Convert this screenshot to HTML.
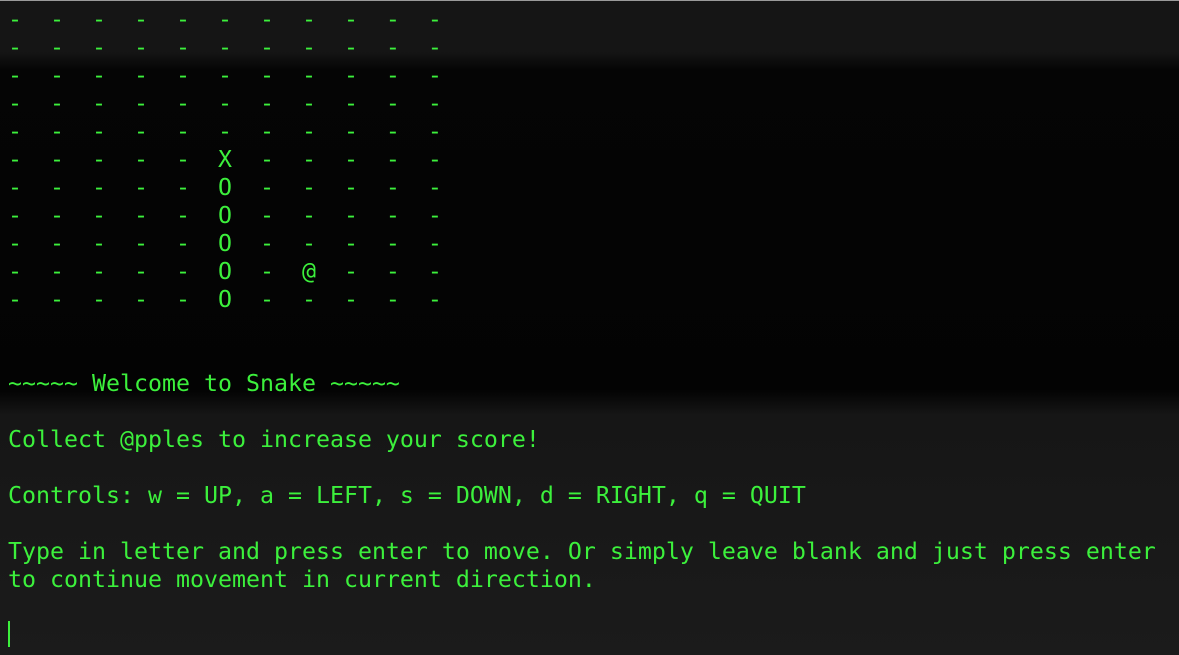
<!DOCTYPE html>
<html><head><style>
html,body{margin:0;padding:0;}
body{width:1179px;height:655px;overflow:hidden;position:relative;
background:linear-gradient(to bottom,#9a9a9a 0,#9a9a9a 1px,#151515 1px,#151515 52px,#050505 70px,#030303 390px,#161616 415px,#1b1b1b 655px);}
pre{position:absolute;left:8px;top:6px;margin:0;font-family:"DejaVu Sans Mono","Liberation Mono",monospace;font-size:23.25px;line-height:28px;color:#3cf03c;white-space:pre;}
.cur{position:absolute;left:8px;top:621px;width:2px;height:26px;background:#3cf03c;}
</style></head><body>
<pre>-  -  -  -  -  -  -  -  -  -  -
-  -  -  -  -  -  -  -  -  -  -
-  -  -  -  -  -  -  -  -  -  -
-  -  -  -  -  -  -  -  -  -  -
-  -  -  -  -  -  -  -  -  -  -
-  -  -  -  -  X  -  -  -  -  -
-  -  -  -  -  O  -  -  -  -  -
-  -  -  -  -  O  -  -  -  -  -
-  -  -  -  -  O  -  -  -  -  -
-  -  -  -  -  O  -  @  -  -  -
-  -  -  -  -  O  -  -  -  -  -


~~~~~ Welcome to Snake ~~~~~

Collect @pples to increase your score!

Controls: w = UP, a = LEFT, s = DOWN, d = RIGHT, q = QUIT

Type in letter and press enter to move. Or simply leave blank and just press enter
to continue movement in current direction.</pre>
<div class="cur"></div>
</body></html>
